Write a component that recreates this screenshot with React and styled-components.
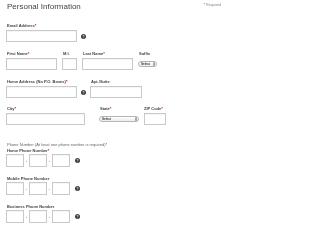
import React from "react";
import styled, { createGlobalStyle } from "styled-components";

const GlobalStyle = createGlobalStyle`
  html, body { margin: 0; padding: 0; background: #fff; }
  body { font-family: "Liberation Sans", Arial, sans-serif; }
  * { box-sizing: border-box; }
`;

const Page = styled.div`
  width: 223px;
  height: 226px;
  padding: 2px 2px 0 6px;
  overflow: hidden;
  will-change: transform;
`;

const Header = styled.div`
  display: flex;
  justify-content: space-between;
  align-items: flex-start;
  height: 10px;
`;

const Title = styled.h1`
  margin: 0 0 0 1px;
  font-size: 8px;
  line-height: 10px;
  font-weight: normal;
  color: #444;
`;

const Required = styled.span`
  font-size: 3.7px;
  line-height: 5px;
  margin-top: 1px;
  color: #888;
`;

const Star = styled.span`
  color: #d0021b;
`;

const Row = styled.div`
  display: flex;
  align-items: flex-start;
  gap: ${(p) => p.$gap ?? 5}px;
  margin-top: ${(p) => p.$mt}px;
`;

const Field = styled.div`
  display: flex;
  flex-direction: column;
  margin-left: ${(p) => p.$ml ?? 0}px;
`;

const Label = styled.label`
  display: block;
  font-size: 4px;
  line-height: 5px;
  font-weight: bold;
  color: #3f3f3f;
  padding-left: ${(p) => p.$pl ?? 1}px;
  margin-bottom: ${(p) => p.$mb ?? 2}px;
  white-space: nowrap;
`;

const Note = styled.div`
  font-size: 4px;
  line-height: 5px;
  color: #666;
  padding-left: 1px;
  margin-top: ${(p) => p.$mt}px;
  white-space: nowrap;
`;

const Controls = styled.div`
  display: flex;
  align-items: center;
  gap: 4px;
  height: 12px;
`;

const Input = styled.div`
  width: ${(p) => p.$w}px;
  height: ${(p) => p.$h ?? 12}px;
  border: 1px solid #c9c9c9;
  background: #fff;
  box-shadow: inset 0 1px 1px rgba(0, 0, 0, 0.04);
`;

const Select = styled.div`
  display: flex;
  align-items: center;
  justify-content: space-between;
  width: ${(p) => p.$w}px;
  height: 6px;
  padding: 0 1.5px 0 2px;
  border: 1px solid #b5b5b5;
  border-radius: 3px;
  background: linear-gradient(#fff, #ececec);
  font-size: 3px;
  line-height: 4px;
  font-weight: bold;
  color: #333;
`;

const Dash = styled.span`
  width: 5px;
  text-align: center;
  font-size: 4px;
  line-height: 5px;
  color: #777;
`;

const PhoneControls = styled.div`
  display: flex;
  align-items: center;
  height: 13px;
`;

const HelpWrap = styled.span`
  display: inline-flex;
  width: 5px;
  height: 5px;
  margin-left: ${(p) => p.$ml ?? 0}px;
`;

function HelpIcon({ ml }) {
  return (
    <HelpWrap $ml={ml}>
      <svg width="5" height="5" viewBox="0 0 10 10">
        <circle cx="5" cy="5" r="5" fill="#3d3d3d" />
        <path
          d="M3.4 3.9 C3.4 2.3 6.6 2.3 6.6 3.9 C6.6 5 5 5 5 6.2"
          stroke="#fff"
          strokeWidth="1.3"
          fill="none"
        />
        <circle cx="5" cy="7.8" r="0.75" fill="#fff" />
      </svg>
    </HelpWrap>
  );
}

function Arrows() {
  return (
    <svg width="2" height="4" viewBox="0 0 4 8">
      <path d="M2 0 L4 3 L0 3 Z M2 8 L4 5 L0 5 Z" fill="#444" />
    </svg>
  );
}

function Req() {
  return <Star>*</Star>;
}

function PhoneGroup({ label, required, mt }) {
  return (
    <Row $mt={mt}>
      <Field>
        <Label $mb={1}>
          {label}
          {required && <Req />}
        </Label>
        <PhoneControls>
          <Input $w={18} $h={13} />
          <Dash>-</Dash>
          <Input $w={18} $h={13} />
          <Dash>-</Dash>
          <Input $w={18} $h={13} />
          <HelpIcon ml={5} />
        </PhoneControls>
      </Field>
    </Row>
  );
}

export default function App() {
  return (
    <>
      <GlobalStyle />
      <Page>
        <Header>
          <Title>Personal Information</Title>
          <Required>
            <Star>*</Star> Required
          </Required>
        </Header>

        <Row $mt={11}>
          <Field>
            <Label>
              Email Address<Req />
            </Label>
            <Controls>
              <Input $w={71} />
              <HelpIcon />
            </Controls>
          </Field>
        </Row>

        <Row $mt={9}>
          <Field>
            <Label>
              First Name<Req />
            </Label>
            <Input $w={51} />
          </Field>
          <Field>
            <Label>M.I.</Label>
            <Input $w={15} />
          </Field>
          <Field>
            <Label>
              Last Name<Req />
            </Label>
            <Input $w={51} />
          </Field>
          <Field>
            <Label>Suffix</Label>
            <Controls>
              <Select $w={19}>
                Select <Arrows />
              </Select>
            </Controls>
          </Field>
        </Row>

        <Row $mt={9} $gap={4}>
          <Field>
            <Label>
              Home Address (No P.O. Boxes)<Req />
            </Label>
            <Controls>
              <Input $w={71} />
              <HelpIcon />
            </Controls>
          </Field>
          <Field>
            <Label>Apt./Suite</Label>
            <Input $w={52} />
          </Field>
        </Row>

        <Row $mt={8}>
          <Field>
            <Label>
              City<Req />
            </Label>
            <Input $w={79} />
          </Field>
          <Field $ml={9}>
            <Label>
              State<Req />
            </Label>
            <Controls>
              <Select $w={40}>
                Select <Arrows />
              </Select>
            </Controls>
          </Field>
          <Field>
            <Label $pl={0}>
              ZIP Code<Req />
            </Label>
            <Input $w={22} />
          </Field>
        </Row>

        <Note $mt={17}>
          Phone Number (At least one phone number is required)<Req />
        </Note>
        <PhoneGroup label="Home Phone Number" required mt={1} />
        <PhoneGroup label="Mobile Phone Number" mt={9} />
        <PhoneGroup label="Business Phone Number" mt={9} />
      </Page>
    </>
  );
}
